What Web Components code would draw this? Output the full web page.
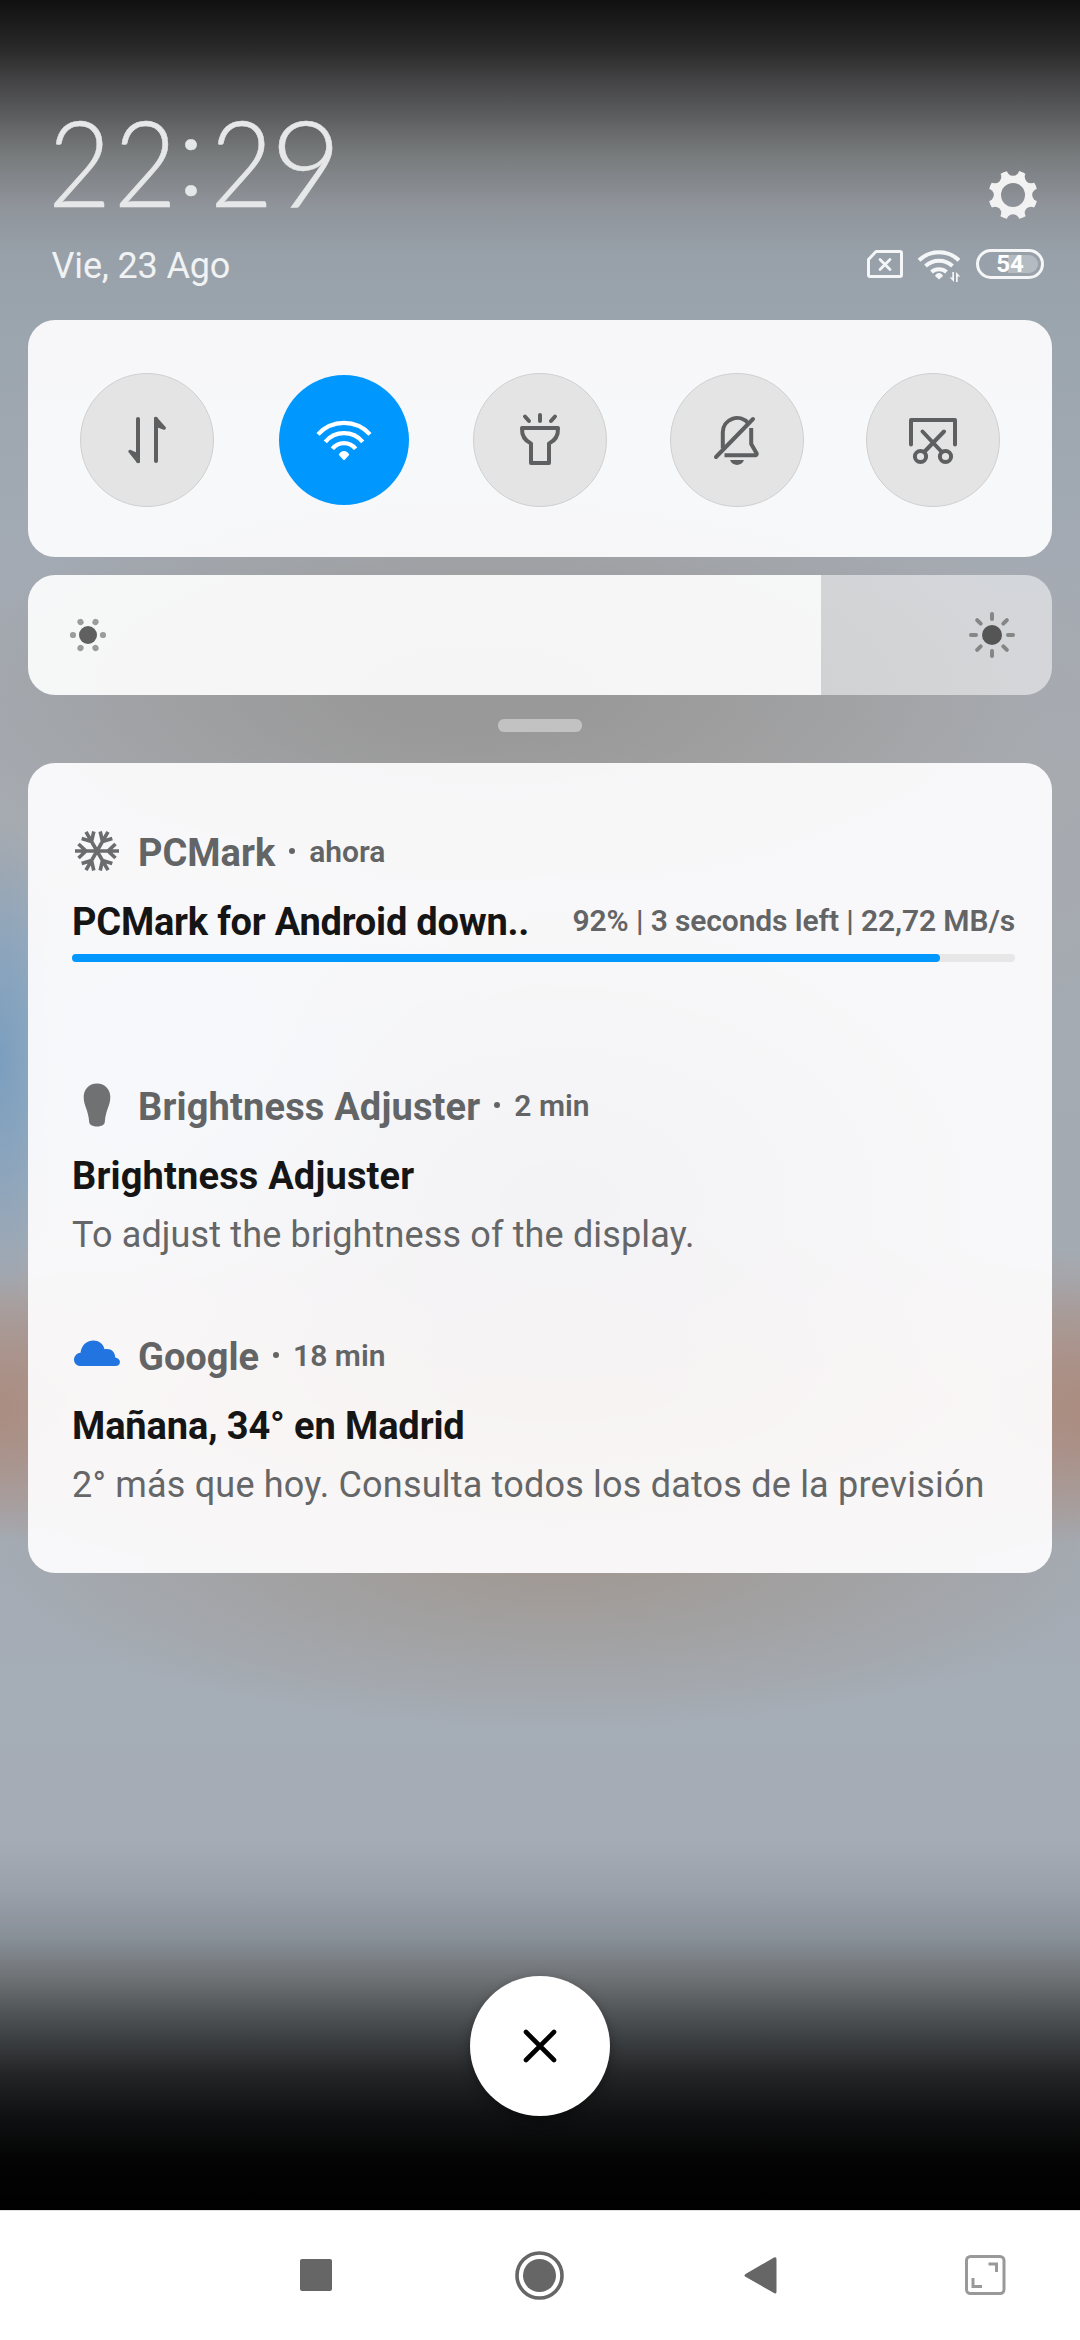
<!DOCTYPE html>
<html lang="es">
<head>
<meta charset="utf-8">
<title>Panel de notificaciones</title>
<style>
html,body{margin:0;padding:0}
body{width:1080px;height:2340px;overflow:hidden;font-family:Roboto,"Noto Sans",sans-serif;background:#000}
</style>
</head>
<body>
<notification-shade>
  <shade-header slot="header" date="Vie, 23 Ago" battery="54"></shade-header>
  <quick-panel slot="quick">
    <quick-toggle icon="data"></quick-toggle>
    <quick-toggle icon="wifi" active></quick-toggle>
    <quick-toggle icon="torch"></quick-toggle>
    <quick-toggle icon="mute"></quick-toggle>
    <quick-toggle icon="capture"></quick-toggle>
  </quick-panel>
  <brightness-slider slot="brightness"></brightness-slider>
  <notification-list slot="list">
    <notification-item icon="snow" app="PCMark" when="ahora" style="height:254px">
      <span slot="title" style="letter-spacing:-.21px">PCMark for Android down..</span>
      <span slot="info">92% | 3 seconds left | 22,72 MB/s</span>
      <download-progress slot="body"></download-progress>
    </notification-item>
    <notification-item icon="bulb" app="Brightness Adjuster" when="2 min" style="height:250px;--name-spacing:.16px">
      <span slot="title" style="letter-spacing:.16px">Brightness Adjuster</span>
      <span slot="body">To adjust the brightness of the display.</span>
    </notification-item>
    <notification-item icon="cloud" app="Google" when="18 min">
      <span slot="title" style="letter-spacing:-.12px">Mañana, 34° en Madrid</span>
      <span slot="body" style="letter-spacing:.2px">2° más que hoy. Consulta todos los datos de la previsión</span>
    </notification-item>
  </notification-list>
  <clear-button slot="clear"></clear-button>
  <nav-bar slot="nav"></nav-bar>
</notification-shade>
<script>
const ICONS = {
  data: `<g fill="#5e5f60"><rect x="-11" y="-23" width="4" height="46" rx="2"/><path d="M-7 15V22C-7.6 23.6-9.6 23.6-10.6 22L-18.6 12C-19 10.6-17.6 9.4-16.2 10L-10.5 12.5Z"/><rect x="7" y="-23" width="4" height="46" rx="2"/><path d="M7 -15V-22C7.6 -23.6 9.6 -23.6 10.6 -22L18.8 -12.8C19.4 -11 17.6 -9.6 16 -10.4L10.5 -12.5Z"/></g>`,
  wifi: `<g fill="none" stroke="#fff" stroke-width="4.2"><path d="M-26 -5.6A35 35 0 0 1 26 -5.6"/><path d="M-18.7 1.8A24.5 24.5 0 0 1 18.7 1.8"/><path d="M-11.6 8.8A14.6 14.6 0 0 1 11.6 8.8"/></g><path fill="#fff" d="M-5.3 14.8C-3.5 9.6 3.5 9.6 5.3 14.8L1 19.4Q0 20.4-1 19.4Z"/>`,
  torch: `<g fill="none" stroke="#5e5f60" stroke-width="4" stroke-linecap="round" stroke-linejoin="round"><path d="M-18 -12H18C18.3 -5 15.5 .5 9 3.5V23H-9V3.5C-15.500 .5-18.300-5-18 -12Z"/><path d="M0 -25V-19M-15 -23.500L-11 -19M15 -23.500L11 -19"/></g>`,
  mute: `<g fill="none" stroke="#5e5f60" stroke-width="4" stroke-linecap="round" stroke-linejoin="round"><path d="M-21 17L16 -21"/><path stroke-linecap="butt" d="M-14.200 8.500V-8A14.200 14.200 0 0 1 11 -16.800M14.200 -12V4L19.700 13.500Q20 15 18.500 15.200H-12.500"/></g><path fill="#5e5f60" d="M-7 20H7C4.500 26.500-4.500 26.500-7 20Z"/>`,
  capture: `<g fill="none" stroke="#5e5f60" stroke-width="4" stroke-linecap="round" stroke-linejoin="round"><path d="M-22 4.500V-20H22V4.500"/><circle cx="-12.500" cy="16.500" r="5.600"/><circle cx="12.500" cy="16.500" r="5.600"/><path d="M-10.500 -8.500L8.800 12M11 -8.500L-8.800 12"/></g>`
};
const arm = '<path d="M0 0H22M11 0L18.500 -7M11 0L18.500 7"/>';
const APP_ICONS = {
  snow: `<g fill="none" stroke="#6b6c6d" stroke-width="3.6">${[0,60,120,180,240,300].map(a=>`<g transform="rotate(${a})">${arm}</g>`).join('')}</g>`,
  bulb: `<path fill="#707173" d="M0 -21.500C8 -21.500 13.300 -15.500 13.300 -8C13.300 1 8.800 4 7.800 17C7.500 23-7.500 23-7.800 17C-8.800 4-13.300 1-13.300 -8C-13.300 -15.500-8 -21.500 0 -21.500Z"/>`,
  cloud: `<path transform="translate(0 -4.500)" fill="#2274e0" d="M-17 15.500C-25 14.500-25 3.500-16.500 2.300C-15 -13 5 -14 7.500 -1.200C13.500 -2.500 18 1 18.300 7C25 8.500 24 15.500 18.500 15.500Z"/>`
};
function define(name, html, setup){
  const t=document.createElement('template'); t.innerHTML=html;
  customElements.define(name, class extends HTMLElement{
    constructor(){super();this.attachShadow({mode:'open'});}
    connectedCallback(){ if(this.shadowRoot.childNodes.length) return;
      this.shadowRoot.append(t.content.cloneNode(true)); if(setup) setup(this,this.shadowRoot); }
  });
}
define('notification-shade', `<style>
:host{display:flex;flex-direction:column;width:1080px;height:2340px;
background:
linear-gradient(180deg,#111 0,#1a1a1a 20px,#2a2a2a 50px,#434345 80px,rgba(92,93,94,.98) 118px,rgba(118,121,122,.95) 155px,rgba(142,146,152,.9) 205px,rgba(150,158,166,.6) 255px,transparent 330px,transparent 1845px,rgba(155,161,170,1) 1890px,#868e96 1940px,#6f7275 1978px,#55585b 2008px,#393c3f 2043px,#232425 2075px,#101112 2115px,#040404 2160px,#000 2205px),
radial-gradient(ellipse 75px 240px at 0 1060px,rgba(112,152,190,.75),rgba(112,152,190,0)),
radial-gradient(ellipse 110px 130px at 0 1410px,rgba(172,132,115,.6),rgba(172,132,115,0)),
radial-gradient(ellipse 110px 130px at 1080px 1410px,rgba(172,132,115,.6),rgba(172,132,115,0)),
radial-gradient(ellipse 330px 230px at 190px 1060px,rgba(135,190,230,.6),rgba(150,190,220,0)),
radial-gradient(ellipse 440px 300px at 560px 1200px,rgba(80,78,95,.75),rgba(110,110,125,0)),
radial-gradient(ellipse 900px 180px at 560px 1400px,rgba(180,118,88,.8),rgba(172,135,115,0)),
radial-gradient(ellipse 560px 170px at 560px 1560px,rgba(160,152,146,.9) 10%,rgba(160,156,154,0)),
radial-gradient(ellipse 560px 210px at 480px 690px,#999 20%,rgba(155,155,155,0)),
radial-gradient(ellipse 760px 330px at 600px 760px,rgba(170,168,168,.9),rgba(170,168,168,0)),
linear-gradient(180deg,#99a2ab 0,#9ba5ae 320px,#a4abb5 600px,#a5abb3 800px,#a4aab2 1500px,#a5adb6 1700px,#a4abb5 1860px)}
main{display:flex;flex-direction:column;padding:0 28px;height:1570px;box-sizing:border-box;flex:none}
.grip{width:84px;height:13px;border-radius:6px;background:rgba(255,255,255,.4);margin:24px auto 31px}
.clear{display:flex;justify-content:center;align-items:flex-start;padding-top:86px;height:320px;box-sizing:border-box;flex:none}
</style><slot name="header"></slot><main><slot name="quick"></slot><slot name="brightness"></slot><div class="grip"></div><slot name="list"></slot></main><div class="clear"><slot name="clear"></slot></div><slot name="nav"></slot>`);

define('shade-header', `<style>
:host{display:flex;justify-content:space-between;height:320px;flex:none;box-sizing:border-box;padding:0 36px 0 47.5px;color:#f0f2f4}
.l{padding-top:111px}
.time{display:flex;font:300 121px/100px Lato,sans-serif;color:#e6e7e8;white-space:nowrap;-webkit-text-stroke:.5px #e6e7e8}
.time span{display:block;transform-origin:0 100%}
.two{transform:scaleX(.9);letter-spacing:3px}
.date{font-size:36px;line-height:42px;margin:34px 0 0 4px;letter-spacing:-.15px;white-space:nowrap}
.r{display:flex;flex-direction:column;align-items:flex-end;padding-top:170px}
.gear{margin-right:6px;display:block}
.s{display:flex;margin-top:29px;align-items:flex-start}
.s svg{display:block}
.bat{box-sizing:border-box;width:68px;height:30px;border:3px solid #f4f6f7;border-radius:15px;margin-left:16px;padding:3px;display:flex;font:700 24px/19px Roboto,sans-serif;color:#fff}
.bat span{flex:1;text-align:center;border-radius:9px;background:linear-gradient(90deg,transparent 47%,rgba(255,255,255,.28) 47%)}
</style>
<div class="l"><div class="time"><span class="two" style="width:132px">22</span><span style="width:30px;text-indent:-3px;transform:translateY(-12px) scaleY(.95)">:</span><span class="two" style="width:61.500px">2</span><span>9</span></div><div class="date"></div></div>
<div class="r"><svg class="gear" width="50" height="50" viewBox="-25 -25 50 50"><mask id="m"><rect x="-25" y="-25" width="50" height="50" fill="#fff"/><circle r="12"/><g class="n"></g></mask><circle r="24.600" fill="#f2f2f3" mask="url(#m)"/></svg>
<div class="s"><svg width="93" height="34" viewBox="867 249 93 34"><g fill="none" stroke="#f4f6f7" stroke-width="3"><path stroke-linejoin="round" d="M876 251.500H900Q901.500 251.500 901.500 253V275Q901.500 276.500 900 276.500H870Q868.500 276.500 868.500 275V259.500Z"/><path stroke-linecap="round" stroke-width="2.800" d="M880 259.500L890 269.500M890 259.500L880 269.500"/><g stroke-width="4"><path d="M919 260.300A29 29 0 0 1 959 260.300M925.500 266A20 20 0 0 1 952.500 266M931.500 272A11.500 11.500 0 0 1 946.500 272"/></g></g><path fill="#f4f6f7" d="M935 276C936.500 272 941.500 272 943 276L939 279.500ZM952.300 272H954V282L949.700 277.500H952.300ZM956 282V272L960.300 276.500H957.700V282Z"/></svg><div class="bat"><span></span></div></div></div>`,
(h,s)=>{s.querySelector('.date').textContent=h.getAttribute('date');s.querySelector('.bat span').textContent=h.getAttribute('battery');
 s.querySelector('.n').innerHTML=[0,45,90,135,180,225,270,315].map(a=>`<circle cx="25.500" cy="0" r="6.300" transform="rotate(${a})"/>`).join('');});

define('quick-panel', `<style>:host{display:flex;justify-content:space-between;align-items:center;box-sizing:border-box;height:237px;flex:none;padding:0 52px;border-radius:27px;background:rgba(254,254,255,.925)}</style><slot></slot>`);
define('quick-toggle', `<style>:host{display:flex;align-items:center;justify-content:center;box-sizing:border-box;width:134px;height:134px;border-radius:50%;background:#e4e4e4;border:1px solid #cfd0d1;margin-top:2px}
:host([active]){background:#0097ff;border:0;width:130px;height:130px;margin:2px 2px 0}svg{display:block}</style><svg width="60" height="60" viewBox="-30 -30 60 60"></svg>`,
(h,s)=>{s.querySelector('svg').innerHTML=ICONS[h.getAttribute('icon')];});

define('brightness-slider', `<style>:host{display:flex;height:120px;flex:none;margin-top:18px;border-radius:27px;overflow:hidden}
.f{width:793px;background:rgba(255,255,255,.905);display:flex;align-items:center;padding-left:40px;box-sizing:border-box}
.e{flex:1;background:rgba(255,255,255,.52);display:flex;align-items:center;justify-content:flex-end;padding-right:35px}svg{display:block}</style>
<div class="f"><svg width="40" height="40" viewBox="-20 -20 40 40"><circle r="9" fill="#606060"/><g class="d" fill="#9c9c9d"></g></svg></div>
<div class="e"><svg width="50" height="50" viewBox="-25 -25 50 50"><circle r="10" fill="#555"/><g class="y" stroke="#868686" stroke-width="4" stroke-linecap="round"></g></svg></div>`,
(h,s)=>{s.querySelector('.d').innerHTML=[0,60,120,180,240,300].map(a=>`<circle cx="15" r="3.100" transform="rotate(${a})"/>`).join('');
s.querySelector('.y').innerHTML=[0,45,90,135,180,225,270,315].map(a=>`<path d="M16 0H21" transform="rotate(${a})"/>`).join('');});

define('notification-list', `<style>:host{display:flex;flex-direction:column;box-sizing:border-box;height:810px;flex:none;border-radius:27px;padding:59px 37px 0 44px;background:rgba(255,254,255,.922)}</style><slot></slot>`);
define('notification-item', `<style>:host{display:flex;flex-direction:column;flex:none}
.h{display:flex;align-items:baseline;height:58px;line-height:62px;color:#636465;font-weight:660;white-space:nowrap}
.h svg{align-self:center;margin-right:16px;flex:none}
.n{font-size:38px;letter-spacing:var(--name-spacing,0)}.d{width:6px;height:6px;background:#636465;border-radius:50%;margin:0 14px 0 14px;align-self:center}.w{font-size:30px;font-weight:600;position:relative;top:-4px}
.t{display:flex;justify-content:space-between;align-items:baseline;height:60px;line-height:60px;margin-top:12px;color:#151515;font-weight:660;font-size:38px;white-space:nowrap}
.i{font-size:30px;font-weight:600;color:#636465;position:relative;top:-4px;letter-spacing:-.12px}
.b{font-size:36px;line-height:58.500px;color:#656667;white-space:nowrap;letter-spacing:.15px}</style>
<div class="h"><svg width="50" height="50" viewBox="-25 -25 50 50"></svg><span class="n"></span><span class="d"></span><span class="w"></span></div>
<div class="t"><slot name="title"></slot><span class="i"><slot name="info"></slot></span></div><div class="b"><slot name="body"></slot></div>`,
(h,s)=>{s.querySelector('svg').innerHTML=APP_ICONS[h.getAttribute('icon')];s.querySelector('.n').textContent=h.getAttribute('app');s.querySelector('.w').textContent=h.getAttribute('when');});
define('download-progress', `<style>:host{display:flex;height:8px;border-radius:4px;background:#e7e7e7;margin-top:2px}i{width:868px;border-radius:4px;background:#0097ff}</style><i></i>`);
define('clear-button', `<style>:host{display:flex;align-items:center;justify-content:center;width:140px;height:140px;border-radius:50%;background:#fff;box-shadow:0 4px 12px rgba(0,0,0,.35)}</style><svg width="40" height="40" viewBox="-20 -20 40 40"><path d="M-14 -14L14 14M14 -14L-14 14" stroke="#000" stroke-width="4.600" stroke-linecap="round"/></svg>`);
define('nav-bar', `<style>:host{display:block;height:130px;box-sizing:border-box;border-top:1px solid #e2e2e2;background:#fff;flex:none}svg{display:block}</style>
<svg width="1080" height="129" viewBox="0 2211 1080 129"><g fill="#666"><rect x="300" y="2259" width="32" height="32" rx="2"/><circle cx="539.500" cy="2275.500" r="16.500"/><path d="M745.500 2274L774 2257.500Q776.500 2256.500 776.500 2259V2291.500Q776.500 2294.500 774 2293L745.500 2276.800Q743.500 2275.400 745.500 2274Z"/></g><circle cx="539.500" cy="2275.500" r="22.500" fill="none" stroke="#666" stroke-width="3.600"/><g fill="none" stroke="#999" stroke-width="3"><rect x="966.500" y="2256.500" width="37.500" height="37" rx="4"/><path d="M988.500 2264H996.500V2272M973 2278V2286.500H982"/></g></svg>`);
</script>
</body>
</html>
